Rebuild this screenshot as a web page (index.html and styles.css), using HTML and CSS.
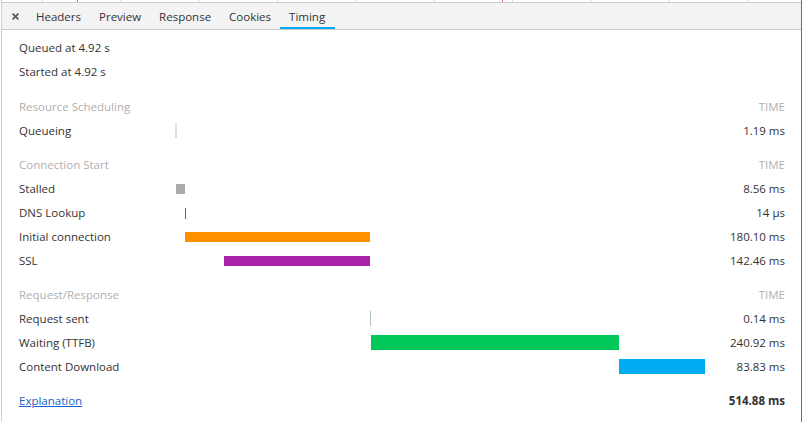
FILE: index.html
```html
<!DOCTYPE html>
<html lang="en">
<head>
<meta charset="utf-8">
<title>Timing</title>
<link rel="stylesheet" href="styles.css">
</head>
<body>
<div class="panel">
  <div class="overview"></div>
  <div class="tabbar">
    <div class="close" aria-label="Close">
      <svg width="7" height="7" viewBox="0 0 7 7"><path d="M0.6 0.6 L6.4 6.4 M6.4 0.6 L0.6 6.4" stroke="#555" stroke-width="1.6" fill="none"/></svg>
    </div>
    <div class="tab">Headers</div>
    <div class="tab">Preview</div>
    <div class="tab">Response</div>
    <div class="tab">Cookies</div>
    <div class="tab active">Timing</div>
  </div>
  <div class="timing">
    <div class="meta">Queued at 4.92 s</div>
    <div class="meta">Started at 4.92 s</div>

    <div class="section">
      <div class="row head"><span class="label">Resource Scheduling</span><span></span><span class="time">TIME</span></div>
      <div class="row"><span class="label">Queueing</span><span class="track"><i class="bar tall queueing" style="margin-left:-1px;width:2px"></i></span><span class="time">1.19 ms</span></div>
    </div>

    <div class="section">
      <div class="row head"><span class="label">Connection Start</span><span></span><span class="time">TIME</span></div>
      <div class="row"><span class="label">Stalled</span><span class="track"><i class="bar stalled" style="margin-left:0;width:9px"></i></span><span class="time">8.56 ms</span></div>
      <div class="row"><span class="label">DNS Lookup</span><span class="track"><i class="bar dns" style="margin-left:9px;width:1px"></i></span><span class="time">14 µs</span></div>
      <div class="row"><span class="label">Initial connection</span><span class="track"><i class="bar connecting" style="margin-left:9px;width:185px"></i></span><span class="time">180.10 ms</span></div>
      <div class="row"><span class="label">SSL</span><span class="track"><i class="bar ssl" style="margin-left:48px;width:146px"></i></span><span class="time">142.46 ms</span></div>
    </div>

    <div class="section">
      <div class="row head"><span class="label">Request/Response</span><span></span><span class="time">TIME</span></div>
      <div class="row"><span class="label">Request sent</span><span class="track"><i class="bar tall sending" style="margin-left:194px;width:1px"></i></span><span class="time">0.14 ms</span></div>
      <div class="row"><span class="label">Waiting (TTFB)</span><span class="track"><i class="bar tall waiting" style="margin-left:195px;width:248px"></i></span><span class="time">240.92 ms</span></div>
      <div class="row"><span class="label">Content Download</span><span class="track"><i class="bar tall receiving" style="margin-left:443px;width:86px"></i></span><span class="time">83.83 ms</span></div>
    </div>

    <div class="section">
      <div class="row foot"><a class="label link" href="#">Explanation</a><span></span><span class="time total">514.88 ms</span></div>
    </div>
  </div>
</div>
</body>
</html>
```

FILE: styles.css
```css
html, body {
  margin: 0;
  padding: 0;
  background: #fff;
}

body {
  font-family: "Open Sans", "Noto Sans", sans-serif;
  font-size: 11.5px;
  color: #333;
}

.panel {
  box-sizing: border-box;
  width: 801px;
  height: 422px;
  margin-left: 1px;
  border-left: 1px solid #d0d0d0;
  border-right: 1px solid #2f7ccc;
  overflow: hidden;
}

.overview {
  height: 2px;
  border-bottom: 1px solid #cccccc;
  background-color: #fff;
  background-image:
    linear-gradient(to right, transparent 75px, #7f7ff5 75px, #7f7ff5 76px, transparent 76px),
    linear-gradient(to right, transparent 500px, #f07070 500px, #f07070 501px, transparent 501px),
    linear-gradient(to right, #dcdcdc 1px, transparent 1px);
  background-size: 100% 100%, 100% 100%, 78.33px 100%;
  background-position: 0 0, 0 0, 40px 0;
  background-repeat: no-repeat, no-repeat, repeat-x;
}

.tabbar {
  display: flex;
  height: 26px;
  background: #f3f3f3;
  border-bottom: 1px solid #cccccc;
}

.close {
  display: flex;
  align-items: center;
  padding: 0 8px 0 10px;
}

.close svg {
  display: block;
}

.tab {
  display: flex;
  align-items: center;
  padding: 0 9px;
  color: #333;
  white-space: nowrap;
}

.tab.active {
  padding: 0 10px 0 9px;
  box-shadow: inset 0 -2px 0 #03a9f4;
}

.timing {
  padding: 6px 16px 0 17px;
}

.meta {
  height: 24px;
  line-height: 24px;
}

.section {
  margin-top: 10px;
}

.row {
  display: grid;
  grid-template-columns: 157px 529px 1fr;
  height: 24px;
  align-items: center;
  white-space: nowrap;
}

.row.head {
  color: #b0b0b0;
}

.time {
  text-align: right;
}

.track {
  display: flex;
  align-items: center;
  height: 24px;
}

.bar {
  display: block;
  flex: none;
  height: 10px;
  margin-top: 2px;
}

.bar.tall {
  height: 15px;
  margin-top: 0;
}

.queueing { background: #dedede; }
.stalled { background: #aaaaaa; }
.dns { background: #009688; height: 11px; }
.connecting { background: #ff9100; }
.ssl { background: #aa22aa; }
.sending { background: #b0bec5; height: 14px; }
.waiting { background: #00c95a; }
.receiving { background: #00acf2; }

.link {
  color: #1a5fcc;
  text-decoration: underline;
  justify-self: start;
}

.total {
  font-weight: 700;
}
```
